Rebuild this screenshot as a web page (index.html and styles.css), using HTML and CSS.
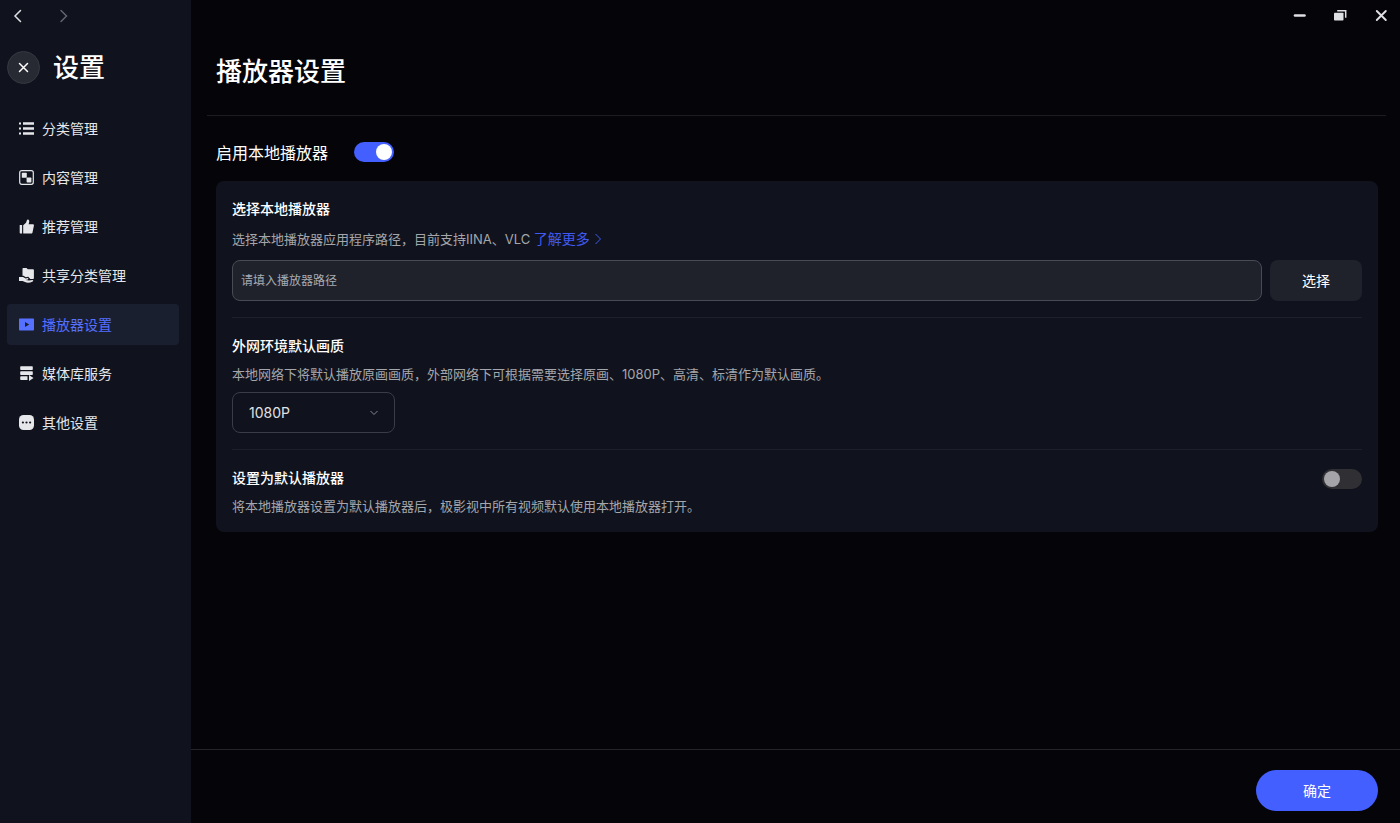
FILE: index.html
```
<!DOCTYPE html>
<html lang="zh-CN">
<head>
    <meta charset="UTF-8">
    <meta name="viewport" content="width=device-width, initial-scale=1.0">
    <title>播放器设置</title>
    <link rel="stylesheet" href="styles.css">
</head>
<body>
    <aside class="sidebar">
        <div class="history">
            <button type="button" class="icon-btn" aria-label="后退">
                <svg width="16" height="16" viewBox="0 0 16 16"><path d="M10.500 2.500 5 8l5.500 5.500"/></svg>
            </button>
            <button type="button" class="icon-btn forward" aria-label="前进">
                <svg width="16" height="16" viewBox="0 0 16 16"><path d="M5 2.500 10.500 8 5 13.500"/></svg>
            </button>
        </div>

        <div class="sidebar-head">
            <button type="button" class="close-btn" aria-label="关闭设置">
                <svg width="11" height="11" viewBox="0 0 11 11"><path d="M1.500 1.500l8 8M9.500 1.500l-8 8"/></svg>
            </button>
            <h2>设置</h2>
        </div>

        <nav class="menu">
            <a href="#" class="menu-item">
                <svg width="15" height="15" viewBox="0 0 15 15"><path d="M0 1.500h2v2H0zM4 1.300h11v2.400H4zM0 6.500h2v2H0zM4 6.300h11v2.400H4zM0 11.500h2v2H0zM4 11.300h11v2.400H4z"/></svg>
                分类管理
            </a>
            <a href="#" class="menu-item">
                <svg width="15" height="15" viewBox="0 0 15 15"><rect x=".7" y=".7" width="13.600" height="13.600" rx="2" fill="none" stroke="currentColor" stroke-width="1.200"/><rect x="2.800" y="2.800" width="5" height="5" rx=".6"/><rect x="7.600" y="7.600" width="4.800" height="4.800" rx=".6"/></svg>
                内容管理
            </a>
            <a href="#" class="menu-item">
                <svg width="15" height="15" viewBox="0 0 15 15"><path d="M.7 6h2.400v8.500H1.400a.7.700 0 0 1-.7-.7zM4.200 6.200 7 3.800 8 1C8.300.2 9.800.3 10.100 1.500c.3 1.100 0 2.400-.5 3.700h4.200c.8 0 1.300.7 1.100 1.500l-1.400 6.700c-.1.700-.7 1.100-1.300 1.100h-8z"/></svg>
                推荐管理
            </a>
            <a href="#" class="menu-item">
                <svg width="15" height="15" viewBox="0 0 15 15"><path d="M3.500.8c0-.4.3-.7.7-.7h3.300l1.300 1.200h5.300c.5 0 .8.3.8.800v8.200c0 .4-.3.700-.8.700h-2.800L9.200 8.800 6.800 9.300 4.500 7.800h-1z"/><path d="M0 8.900h4l2.600 1.500 2-.5c1 0 1 1.100.2 1.500l-2.200.7 3.400.5 3.500-.5c.9 0 1 .9.200 1.300-1.500.8-3.100 1.300-4.700 1.300-2.200 0-3.900-.9-5.400-1.600H0z"/></svg>
                共享分类管理
            </a>
            <a href="#" class="menu-item active" aria-current="page">
                <svg width="15" height="15" viewBox="0 0 15 15"><path fill-rule="evenodd" d="M1 1.500h13c.6 0 1 .4 1 1v10c0 .6-.4 1-1 1H1c-.6 0-1-.4-1-1v-10c0-.6.4-1 1-1zM6 5v5l4.200-2.500z"/></svg>
                播放器设置
            </a>
            <a href="#" class="menu-item">
                <svg width="15" height="15" viewBox="0 0 15 15"><rect x="1.200" y=".3" width="12.600" height="3.800" rx=".8"/><rect x="1.200" y="5.300" width="12.600" height="3.800" rx=".8"/><path d="M2 10.300h6.500v3.700H2a.8.800 0 0 1-.8-.8v-2.100c0-.4.4-.8.8-.8zM10 9v6l4.500-3z"/></svg>
                媒体库服务
            </a>
            <a href="#" class="menu-item">
                <svg width="15" height="15" viewBox="0 0 15 15"><rect width="15" height="15" rx="4.500"/><g fill="#10131d"><circle cx="3.900" cy="7.500" r="1.100"/><circle cx="7.500" cy="7.500" r="1.100"/><circle cx="11.100" cy="7.500" r="1.100"/></g></svg>
                其他设置
            </a>
        </nav>
    </aside>

    <main class="main">
        <div class="window-bar">
            <button type="button" class="icon-btn" aria-label="最小化">
                <svg width="14" height="14" viewBox="0 0 14 14"><path d="M3 7.500h9.500" stroke-width="2.600"/></svg>
            </button>
            <button type="button" class="icon-btn" aria-label="还原">
                <svg width="14" height="14" viewBox="0 0 14 14"><path d="M4.200 2.700h8.500v7" stroke-width="1.500" stroke-linecap="butt"/><rect x="1" y="4.800" width="9.500" height="7.800" rx=".8" fill="currentColor" stroke="none"/></svg>
            </button>
            <button type="button" class="icon-btn" aria-label="关闭">
                <svg width="14" height="14" viewBox="0 0 14 14"><path d="M2.800 3l9 9M11.800 3l-9 9" stroke-width="1.900"/></svg>
            </button>
        </div>

        <header class="page-head">
            <h1>播放器设置</h1>
        </header>

        <div class="content">
            <div class="enable-row">
                <label for="enable-player">启用本地播放器</label>
                <input type="checkbox" class="switch" id="enable-player" checked>
            </div>

            <div class="panel">
                <section class="setting">
                    <h3><label for="player-path">选择本地播放器</label></h3>
                    <p class="with-link">选择本地播放器应用程序路径，目前支持IINA、VLC <a href="#" class="more">了解更多<svg width="8" height="12" viewBox="0 0 8 12"><path d="M1.500 1 6.500 6l-5 5"/></svg></a></p>
                    <div class="path-row">
                        <input type="text" id="player-path" placeholder="请填入播放器路径">
                        <button type="button" class="choose-btn">选择</button>
                    </div>
                </section>

                <section class="setting">
                    <h3><label for="quality">外网环境默认画质</label></h3>
                    <p>本地网络下将默认播放原画画质，外部网络下可根据需要选择原画、1080P、高清、标清作为默认画质。</p>
                    <div class="select-box">
                        <select id="quality">
                            <option>原画</option>
                            <option selected>1080P</option>
                            <option>高清</option>
                            <option>标清</option>
                        </select>
                        <svg width="10" height="6" viewBox="0 0 10 6"><path d="M1.500 1 5 4.500 8.500 1"/></svg>
                    </div>
                </section>

                <section class="setting default-row">
                    <div>
                        <h3><label for="default-player">设置为默认播放器</label></h3>
                        <p>将本地播放器设置为默认播放器后，极影视中所有视频默认使用本地播放器打开。</p>
                    </div>
                    <input type="checkbox" class="switch" id="default-player">
                </section>
            </div>
        </div>

        <footer class="footer">
            <button type="button" class="ok-btn">确定</button>
        </footer>
    </main>
</body>
</html>
```
FILE: styles.css
```
* {
    box-sizing: border-box;
}

body {
    display: flex;
    min-height: 100vh;
    margin: 0;
    background: #040409;
    color: #fff;
    font-family: Inter, "Noto Sans CJK SC", sans-serif;
    font-size: 14px;
}

h1, h2, h3, p {
    margin: 0;
}

h1, h2 {
    font-size: 26px;
    line-height: 42px;
    font-weight: 500;
}

button, input, select {
    font: inherit;
    color: inherit;
}

button {
    padding: 0;
    border: none;
    background: none;
    line-height: 20px;
    cursor: pointer;
}

a {
    text-decoration: none;
}

/* sidebar */
.sidebar {
    flex: 0 0 191px;
    padding: 4px 12px 16px 7px;
    background: #10131d;
}

.history {
    display: flex;
    gap: 22px;
    margin-left: -1px;
}

.icon-btn {
    display: flex;
    align-items: center;
    justify-content: center;
    width: 24px;
    height: 24px;
    color: #dfe0e4;
}

.icon-btn svg, .close-btn svg {
    fill: none;
    stroke: currentColor;
    stroke-width: 1.5;
    stroke-linecap: round;
}

.forward {
    color: #63656d;
}

.sidebar-head {
    display: flex;
    gap: 13px;
    margin: 19px 0;
}

.close-btn {
    display: flex;
    align-items: center;
    justify-content: center;
    width: 33px;
    height: 33px;
    margin-top: 4px;
    border: 1px solid #363942;
    border-radius: 50%;
    background: #272a33;
}

.menu {
    display: flex;
    flex-direction: column;
    gap: 8px;
}

.menu-item {
    display: flex;
    align-items: center;
    gap: 8px;
    height: 41px;
    padding: 0 12px;
    border-radius: 4px;
    color: #e6e7ea;
    line-height: 18px;
}

.menu-item svg {
    fill: currentColor;
}

.menu-item.active {
    background: #1a1f30;
    color: #5670ff;
}

/* main area */
.main {
    display: flex;
    flex: 1;
    flex-direction: column;
    min-width: 0;
}

.window-bar {
    display: flex;
    justify-content: flex-end;
    gap: 17px;
    padding: 3px 7px 4px;
}

.page-head {
    margin: 0 14px 0 16px;
    padding: 20px 9px 22px;
    border-bottom: 1px solid #1c1c21;
}

.content {
    flex: 1;
    padding: 24px 22px 24px 25px;
}

.enable-row {
    display: flex;
    align-items: center;
    gap: 26px;
    height: 24px;
    margin-bottom: 17px;
    font-size: 16px;
}

.switch {
    display: flex;
    flex: none;
    align-items: center;
    appearance: none;
    width: 40px;
    height: 20px;
    margin: 0;
    padding: 0 2px;
    border-radius: 10px;
    background: #303034;
    cursor: pointer;
}

.switch::before {
    content: "";
    width: 16px;
    height: 16px;
    border-radius: 50%;
    background: #a5a5a9;
}

.switch:checked {
    justify-content: flex-end;
    background: #445fff;
}

.switch:checked::before {
    background: #fff;
}

.panel {
    padding: 0 16px;
    border-radius: 8px;
    background: #10131d;
}

.setting {
    padding: 16px 0;
}

.setting + .setting {
    border-top: 1px solid #1d2029;
}

.setting h3 {
    font-size: 14px;
    line-height: 24px;
    font-weight: 500;
}

.setting p {
    margin: 6px 0 8px;
    color: #a5a6ab;
    font-size: 13px;
    line-height: 20px;
}

.setting p.with-link {
    margin: 7px 0 10px;
    line-height: 22px;
}

.more {
    color: #4059f5;
    font-size: 14px;
}

.more svg {
    margin-left: 4px;
    vertical-align: -1px;
    fill: none;
    stroke: currentColor;
}

.path-row {
    display: flex;
    gap: 8px;
}

.path-row input {
    flex: 1;
    min-width: 0;
    height: 41px;
    padding: 0 8px;
    border: 1px solid #494b54;
    border-radius: 8px;
    background: #1f222a;
    font-size: 12px;
}

.path-row input::placeholder {
    color: #a9abb2;
}

.choose-btn {
    width: 92px;
    height: 41px;
    border-radius: 8px;
    background: #1f222a;
}

.select-box {
    position: relative;
    width: 163px;
}

.select-box select {
    display: block;
    appearance: none;
    width: 100%;
    height: 41px;
    padding: 0 32px 0 16px;
    border: 1px solid #3b3d46;
    border-radius: 8px;
    background: #10131d;
    color: #e0e1e4;
}

.select-box svg {
    position: absolute;
    top: 18px;
    right: 16px;
    fill: none;
    stroke: #85878e;
    pointer-events: none;
}

.default-row {
    display: flex;
    align-items: flex-start;
    justify-content: space-between;
    padding-bottom: 8px;
}

.default-row .switch {
    margin-top: 3px;
}

.footer {
    display: flex;
    justify-content: flex-end;
    padding: 20px 22px 12px;
    border-top: 1px solid #242429;
}

.ok-btn {
    width: 122px;
    height: 41px;
    border-radius: 21px;
    background: #445fff;
}
```
